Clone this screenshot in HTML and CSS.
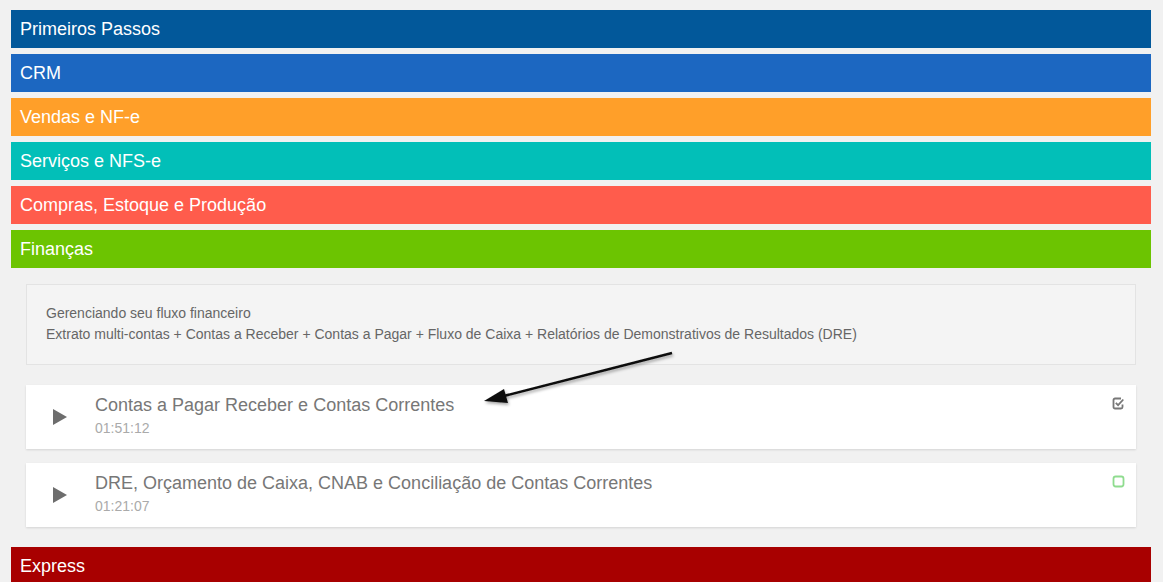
FILE: index.html
```html
<!DOCTYPE html>
<html>
<head>
<title>Cursos</title>
<meta charset="UTF-8">
<meta name="viewport" content="width=device-width, initial-scale=1.0">
<link rel="stylesheet" href="styles.css">
</head>
<body>
<div class="modules">
  <div class="module primeiros">Primeiros Passos</div>
  <div class="module crm">CRM</div>
  <div class="module vendas">Vendas e NF-e</div>
  <div class="module servicos">Serviços e NFS-e</div>
  <div class="module compras">Compras, Estoque e Produção</div>
  <div class="module financas">Finanças</div>

  <div class="module-body">
    <div class="about">
      <p>Gerenciando seu fluxo financeiro</p>
      <p>Extrato multi-contas + Contas a Receber + Contas a Pagar + Fluxo de Caixa + Relatórios de Demonstrativos de Resultados (DRE)</p>
    </div>

    <div class="lesson">
      <span class="play"></span>
      <div class="lesson-info">
        <div class="lesson-title">Contas a Pagar Receber e Contas Correntes</div>
        <div class="lesson-time">01:51:12</div>
      </div>
      <svg class="status" width="13" height="13" viewBox="0 0 13 13">
        <path d="M10.5 7.5v2.5a1.5 1.5 0 0 1-1.5 1.5H3A1.5 1.5 0 0 1 1.5 10V3A1.5 1.5 0 0 1 3 1.5h6" fill="none" stroke="#777" stroke-width="1.8"/>
        <path d="M3.8 5.8l2.3 2.3 5.2-5.6" fill="none" stroke="#777" stroke-width="1.8"/>
      </svg>
    </div>

    <div class="lesson">
      <span class="play"></span>
      <div class="lesson-info">
        <div class="lesson-title">DRE, Orçamento de Caixa, CNAB e Conciliação de Contas Correntes</div>
        <div class="lesson-time">01:21:07</div>
      </div>
      <svg class="status" width="13" height="13" viewBox="0 0 13 13">
        <rect x="1.5" y="1.5" width="10" height="10" rx="2.2" fill="none" stroke="#8fdc8f" stroke-width="1.8"/>
      </svg>
    </div>
  </div>

  <div class="module express">Express</div>
</div>

<!-- seta de destaque -->
<svg class="pointer" width="1163" height="582" viewBox="0 0 1163 582">
  <defs>
    <filter id="sombra" x="-10%" y="-50%" width="120%" height="200%">
      <feDropShadow dx="1" dy="2" stdDeviation="1.5" flood-color="#000" flood-opacity="0.35"/>
    </filter>
  </defs>
  <g filter="url(#sombra)">
    <line x1="672" y1="353" x2="500" y2="397" stroke="#111" stroke-width="2.5"/>
    <polygon points="484,401 504,389 508,403" fill="#111"/>
  </g>
</svg>
</body>
</html>
```

FILE: styles.css
```css
body{
    margin: 0;
    background: #f1f1f1;
    font-family: "Liberation Sans", Arial, sans-serif;
}
.modules{
    width: 1140px;
    padding: 10px 0 0 11px;
}
.module{
    height: 38px;
    line-height: 38px;
    padding-left: 9px;
    margin-bottom: 6px;
    font-size: 18px;
    color: #fff;
}
.primeiros{ background: #02589a; }
.crm{ background: #1c67c1; }
.vendas{ background: #ff9f29; }
.servicos{ background: #02bfb8; }
.compras{ background: #ff5c4c; }
.financas{ background: #6cc401; margin-bottom: 0; }
.express{ background: #a80000; }

.module-body{
    padding: 16px 15px 20px 15px;
}
.about{
    background: #f4f4f4;
    border: 1px solid #e3e3e3;
    padding: 18px 19px 19px 19px;
    margin-bottom: 20px;
    font-size: 14px;
    color: #666;
}
.about p{
    margin: 0;
    line-height: 21px;
}
.lesson{
    display: flex;
    align-items: center;
    height: 64px;
    background: #fff;
    box-shadow: 0 1px 2px rgba(0,0,0,0.12);
    margin-bottom: 14px;
    position: relative;
}
.lesson:last-child{
    margin-bottom: 0;
}
.play{
    width: 0;
    height: 0;
    border-top: 8px solid transparent;
    border-bottom: 8px solid transparent;
    border-left: 14px solid #6d6d6d;
    margin: 0 28px 0 27px;
}
.lesson-info{
    flex: 1;
    padding-bottom: 4px;
}
.lesson-title{
    font-size: 18px;
    color: #777;
    line-height: 22px;
}
.lesson-time{
    font-size: 14px;
    color: #aaa;
    margin-top: 4px;
}
.status{
    position: absolute;
    top: 12px;
    right: 11px;
}
.pointer{
    position: absolute;
    top: 0;
    left: 0;
    pointer-events: none;
}
```
